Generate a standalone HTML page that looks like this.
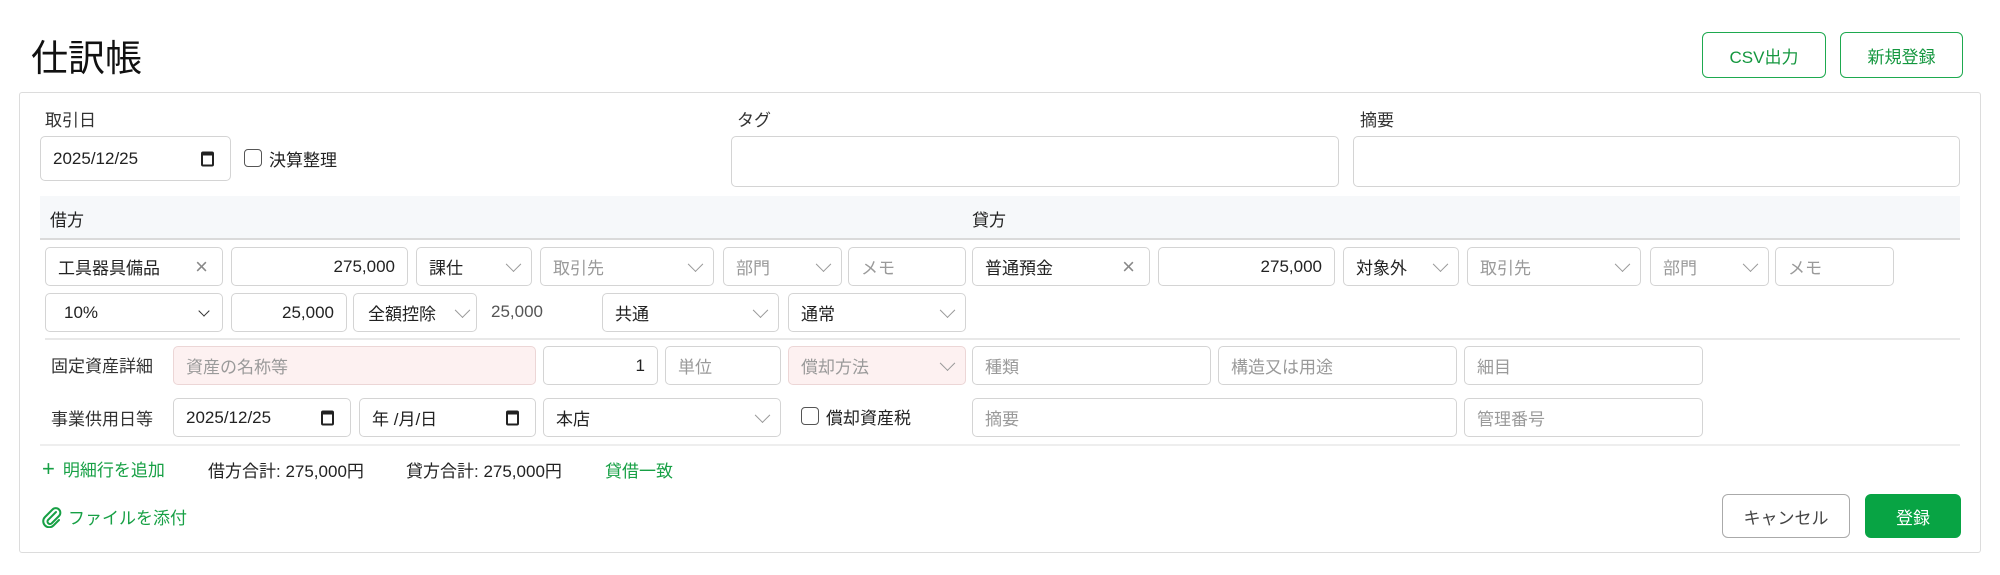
<!DOCTYPE html>
<html><head><meta charset="utf-8"><style>
*{box-sizing:border-box;margin:0;padding:0}
body{width:2000px;height:575px;background:#fff;position:relative;overflow:hidden;font-family:"Liberation Sans","Noto Sans CJK JP",sans-serif;color:#222;font-size:17px}
.a{position:absolute}
.f{position:absolute;border:1.5px solid #d4d4d4;border-radius:5px;background:#fff;display:flex;align-items:center;padding:0 12px;font-size:17px;color:#222;white-space:nowrap}
.ph{color:#9a9a9a}
.r{justify-content:flex-end}
.pk{background:#fdf1f1;border-color:#ecd6d6}
.chev{position:absolute;right:12px;top:50%;width:11px;height:11px;border-right:1.5px solid #999;border-bottom:1.5px solid #999;transform:translateY(-75%) rotate(45deg)}
.chevd{border-color:#333}
.x{position:absolute;right:14px;top:50%;transform:translateY(-50%);color:#888;font-size:22px;font-weight:300}
.cal{position:absolute;right:16px;top:50%;transform:translateY(-50%);width:13px;height:15px;border:2px solid #222;border-top-width:4px;border-radius:2px}
.lbl{position:absolute;font-size:17px;color:#333}
.cb{position:absolute;width:18px;height:18px;border:1.5px solid #555;border-radius:4px;background:#fff}
.btn{position:absolute;border:1.5px solid #1ea94f;border-radius:6px;color:#14973f;display:flex;align-items:center;justify-content:center;font-size:17px}
.g{color:#17a045}
</style></head><body>
<div class="a" style="left:31px;top:28px;font-size:37px;color:#111">仕訳帳</div>
<div class="btn" style="left:1702px;top:32px;width:124px;height:46px">CSV出力</div>
<div class="btn" style="left:1840px;top:32px;width:123px;height:46px">新規登録</div>

<div class="a" style="left:19px;top:92px;width:1962px;height:461px;border:1.5px solid #dcdcdc;border-radius:3px"></div>

<div class="lbl" style="left:45px;top:106px">取引日</div>
<div class="f" style="left:40px;top:136px;width:191px;height:45px">2025/12/25<span class="cal"></span></div>
<div class="cb" style="left:244px;top:149px"></div>
<div class="lbl" style="left:269px;top:146px;color:#222">決算整理</div>
<div class="lbl" style="left:737px;top:106px">タグ</div>
<div class="f" style="left:731px;top:136px;width:608px;height:51px"></div>
<div class="lbl" style="left:1360px;top:106px">摘要</div>
<div class="f" style="left:1353px;top:136px;width:607px;height:51px"></div>

<div class="a" style="left:40px;top:196px;width:1920px;height:44px;background:#f6f8fa;border-bottom:2px solid #dadada"></div>
<div class="lbl" style="left:50px;top:206px;color:#222">借方</div>
<div class="lbl" style="left:972px;top:206px;color:#222">貸方</div>

<!-- row1 -->
<div class="f" style="left:45px;top:247px;width:178px;height:39px">工具器具備品<span class="x">×</span></div>
<div class="f r" style="left:231px;top:247px;width:177px;height:39px">275,000</div>
<div class="f" style="left:416px;top:247px;width:116px;height:39px">課仕<span class="chev"></span></div>
<div class="f ph" style="left:540px;top:247px;width:174px;height:39px">取引先<span class="chev"></span></div>
<div class="f ph" style="left:723px;top:247px;width:119px;height:39px">部門<span class="chev"></span></div>
<div class="f ph" style="left:848px;top:247px;width:118px;height:39px">メモ</div>
<div class="f" style="left:972px;top:247px;width:178px;height:39px">普通預金<span class="x">×</span></div>
<div class="f r" style="left:1158px;top:247px;width:177px;height:39px">275,000</div>
<div class="f" style="left:1343px;top:247px;width:116px;height:39px">対象外<span class="chev"></span></div>
<div class="f ph" style="left:1467px;top:247px;width:174px;height:39px">取引先<span class="chev"></span></div>
<div class="f ph" style="left:1650px;top:247px;width:119px;height:39px">部門<span class="chev"></span></div>
<div class="f ph" style="left:1775px;top:247px;width:119px;height:39px">メモ</div>

<!-- row2 -->
<div class="f" style="left:45px;top:293px;width:178px;height:39px;padding-left:18px">10%<span class="chev chevd" style="width:8px;height:8px;right:14px"></span></div>
<div class="f r" style="left:231px;top:293px;width:116px;height:39px">25,000</div>
<div class="f" style="left:353px;top:293px;width:124px;height:39px;padding-left:14px">全額控除<span class="chev" style="right:8px"></span></div>
<div class="a" style="left:491px;top:302px;color:#555">25,000</div>
<div class="f" style="left:602px;top:293px;width:177px;height:39px">共通<span class="chev"></span></div>
<div class="f" style="left:788px;top:293px;width:178px;height:39px">通常<span class="chev"></span></div>
<div class="a" style="left:45px;top:338px;width:1915px;height:2px;background:#e8e8e8"></div>

<!-- row3 -->
<div class="lbl" style="left:51px;top:352px">固定資産詳細</div>
<div class="f pk ph" style="left:173px;top:346px;width:363px;height:39px">資産の名称等</div>
<div class="f r" style="left:543px;top:346px;width:115px;height:39px">1</div>
<div class="f ph" style="left:665px;top:346px;width:116px;height:39px">単位</div>
<div class="f pk ph" style="left:788px;top:346px;width:178px;height:39px">償却方法<span class="chev"></span></div>
<div class="f ph" style="left:972px;top:346px;width:239px;height:39px">種類</div>
<div class="f ph" style="left:1218px;top:346px;width:239px;height:39px">構造又は用途</div>
<div class="f ph" style="left:1464px;top:346px;width:239px;height:39px">細目</div>

<!-- row4 -->
<div class="lbl" style="left:51px;top:405px">事業供用日等</div>
<div class="f" style="left:173px;top:398px;width:178px;height:39px">2025/12/25<span class="cal"></span></div>
<div class="f" style="left:359px;top:398px;width:177px;height:39px">年 /月/日<span class="cal"></span></div>
<div class="f" style="left:543px;top:398px;width:238px;height:39px">本店<span class="chev"></span></div>
<div class="cb" style="left:801px;top:407px"></div>
<div class="lbl" style="left:826px;top:404px;color:#222">償却資産税</div>
<div class="f ph" style="left:972px;top:398px;width:485px;height:39px">摘要</div>
<div class="f ph" style="left:1464px;top:398px;width:239px;height:39px">管理番号</div>
<div class="a" style="left:40px;top:444px;width:1920px;height:1.5px;background:#eeeeee"></div>

<div class="a g" style="left:42px;top:456px"><span style="font-size:22px;line-height:17px;margin-right:8px">+</span>明細行を追加</div>
<div class="a" style="left:208px;top:457px">借方合計: 275,000円</div>
<div class="a" style="left:406px;top:457px">貸方合計: 275,000円</div>
<div class="a g" style="left:605px;top:457px">貸借一致</div>
<div class="a g" style="left:42px;top:504px;display:flex;align-items:center">
<svg width="20" height="22" viewBox="0 0 20 22" style="margin-right:6px"><path d="M14 6 L6 14 a2.5 2.5 0 0 0 3.5 3.5 L17 10 a4.5 4.5 0 0 0 -6.5 -6.5 L3 11 a6 6 0 0 0 8.5 8.5 L17 14" fill="none" stroke="#17a045" stroke-width="2" stroke-linecap="round"/></svg>ファイルを添付</div>

<div class="btn" style="left:1722px;top:494px;width:128px;height:44px;border-color:#aaa;color:#444">キャンセル</div>
<div class="btn" style="left:1865px;top:494px;width:96px;height:44px;background:#08a444;border-color:#08a444;color:#fff">登録</div>
</body></html>
